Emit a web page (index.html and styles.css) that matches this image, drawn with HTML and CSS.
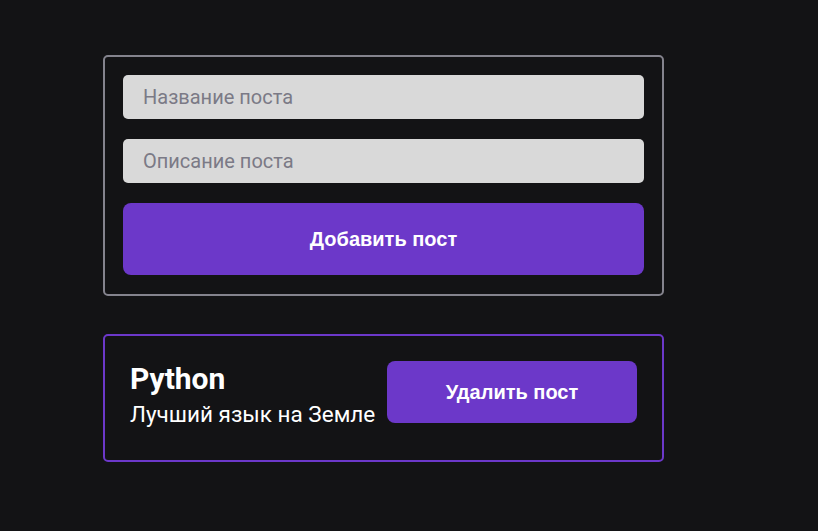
FILE: index.html
```html
<!DOCTYPE html>
<html lang="ru">
<head>
<meta charset="utf-8">
<title>Посты</title>
<link rel="stylesheet" href="styles.css">
</head>
<body>
<div class="app">
  <form class="post-form">
    <input class="field" type="text" placeholder="Название поста">
    <input class="field" type="text" placeholder="Описание поста">
    <button class="btn btn-add" type="button">Добавить пост</button>
  </form>
  <div class="post">
    <div class="post-content">
      <div class="post-title">Python</div>
      <div class="post-body">Лучший язык на Земле</div>
    </div>
    <button class="btn btn-delete" type="button">Удалить пост</button>
  </div>
</div>
</body>
</html>
```

FILE: styles.css
```css
html, body {
  margin: 0;
  padding: 0;
  background: #131315;
  height: 100%;
}

.app {
  width: 561px;
  padding: 55px 0 0 103px;
  display: flex;
  flex-direction: column;
  gap: 38px;
  font-family: Roboto, "Liberation Sans", sans-serif;
}

.post-form {
  box-sizing: border-box;
  width: 561px;
  border: 2px solid #84838d;
  border-radius: 5px;
  padding: 18px 18px 19px;
  display: flex;
  flex-direction: column;
  gap: 20px;
  margin: 0;
}

.field {
  box-sizing: border-box;
  height: 44px;
  width: 100%;
  border: none;
  outline: none;
  border-radius: 5px;
  background: #d9d9d9;
  padding: 0 20px;
  font-family: Roboto, "Liberation Sans", sans-serif;
  font-size: 20px;
  color: #222;
}

.field::placeholder {
  color: #7b7a86;
}

.btn {
  border: none;
  background: #6c38c9;
  color: #ffffff;
  font-family: "Liberation Sans", Arial, sans-serif;
  font-weight: bold;
  font-size: 20px;
  border-radius: 8px;
  cursor: pointer;
}

.btn-add {
  height: 72px;
  width: 100%;
}

.post {
  box-sizing: border-box;
  width: 561px;
  border: 2px solid #6c38c9;
  border-radius: 5px;
  padding: 25px 25px 33px;
  display: flex;
  justify-content: space-between;
  align-items: flex-start;
  color: #ffffff;
}

.post-content {
  display: flex;
  flex-direction: column;
  gap: 5px;
}

.post-title {
  font-size: 30px;
  font-weight: bold;
  line-height: 35px;
}

.post-body {
  font-size: 22.5px;
  line-height: 26px;
}

.btn-delete {
  width: 250px;
  height: 62px;
}
```
